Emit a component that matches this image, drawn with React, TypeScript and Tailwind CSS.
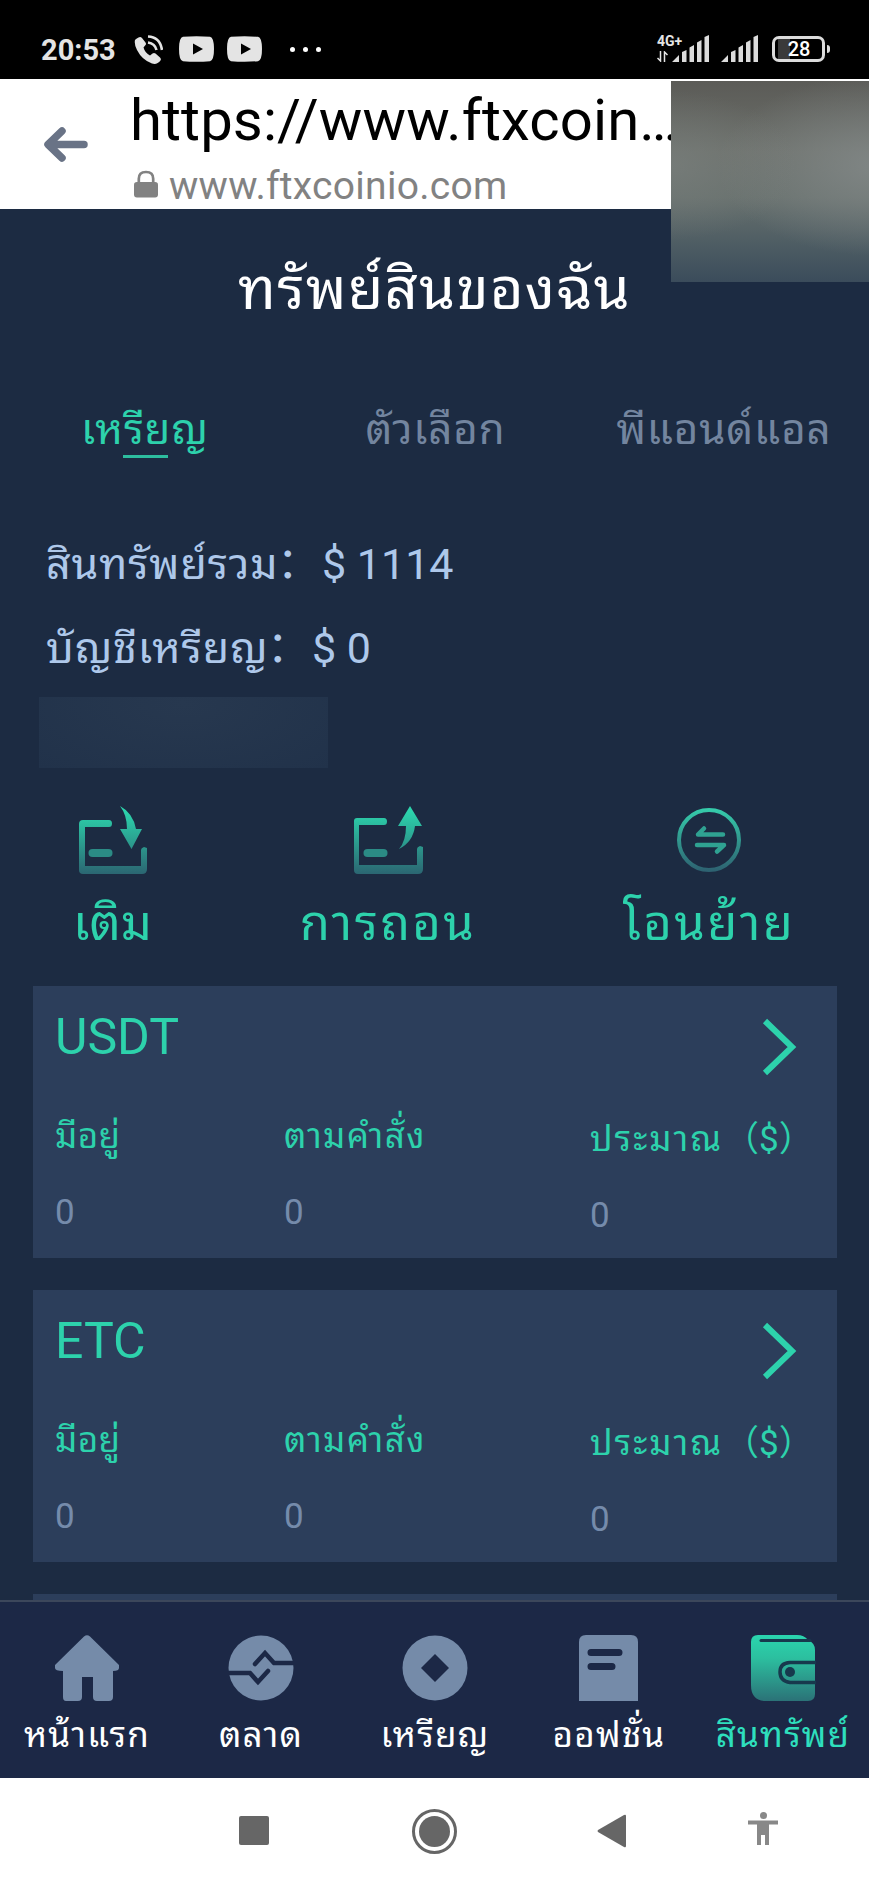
import type { ReactNode } from 'react';

const coins = ['USDT', 'ETC'];

function StatusBar() {
  return (
    <header className="flex h-[79px] items-start bg-black pt-[34px] pl-[41px] text-[#e4e4e4]">
      <span className="w-[93px] text-[29px] leading-[32px] font-bold">20:53</span>
      <svg className="mt-px h-[29px] w-[29px]" viewBox="0 0 29 29" fill="none">
        <path d="M1 5Q0 9 3 15 8 25 18 28.500 23 30 26.500 25.500 27.500 24 26 22.500L21.500 18.500Q20 17.500 18.500 18.500L16 20.500Q11 18 9.500 12.500L11.500 10Q12.500 9 11.500 7.500L8 3Q6.500 1.500 4.500 2.500 2 3.500 1 5Z" fill="currentColor" />
        <path d="M14 1.500Q26 2 28 15M14 7.500Q21 8.500 22.500 15" stroke="currentColor" strokeWidth="2.6" />
      </svg>
      {[0, 1].map((i) => (
        <svg key={i} className={i === 0 ? 'mt-[2px] ml-[16px] h-[26px] w-[35px]' : 'mt-[2px] ml-[13px] h-[26px] w-[35px]'} viewBox="0 0 35 26">
          <path d="M4 0.800Q17.500-.4 31 .8 35 1.500 35 13T31 25.200Q17.500 26.400 4 25.200 0 24.500 0 13T4 .8Z" fill="currentColor" />
          <path d="M14 7.500V18.500L24 13Z" fill="#000" />
        </svg>
      ))}
      <div className="mt-[13px] ml-[28px] flex gap-[8px]">
        <i className="h-[5px] w-[5px] rounded-full bg-white" />
        <i className="h-[5px] w-[5px] rounded-full bg-white" />
        <i className="h-[5px] w-[5px] rounded-full bg-white" />
      </div>
      <div className="ml-[336px] w-[26px]">
        <div className="text-[14px] leading-[14px] font-bold">4G+</div>
        <svg className="mt-[3px] h-[11px] w-[11px]" viewBox="0 0 11 11" stroke="currentColor" strokeWidth="1.5" fill="none">
          <path d="M3.500 0V10L.5 7M7.500 11V1L10.500 4" />
        </svg>
      </div>
      <Signal className="-ml-[11px]" />
      <Signal className="ml-[12px]" />
      <div className="mt-[2px] ml-[14px] flex h-[26px] w-[53px] items-center justify-center rounded-[7px] border-[3px] border-[#dcdcdc] bg-[linear-gradient(90deg,#000_3px,#3a3a3a_3px,#3a3a3a_15px,#000_15px)] pl-px text-[20px] leading-[20px] font-medium text-white">
        28
      </div>
      <i className="mt-[11px] ml-[2px] h-[8px] w-[3px] rounded-r bg-[#dcdcdc]" />
    </header>
  );
}

function Signal({ className }: { className: string }) {
  return (
    <svg className={`mt-px h-[27px] w-[37px] ${className}`} viewBox="0 0 37 27" fill="#dcdcdc">
      <path d="M0 27 7 20V27ZM10 17 14.500 15V27H10ZM17.500 12.500 22 10V27H17.500ZM25 7.500 29.500 5V27H25ZM32.500 2 37 0V27H32.500Z" />
    </svg>
  );
}

function AddressBar() {
  return (
    <div className="relative flex h-[130px] bg-white">
      <svg className="mt-[47px] ml-[43px] h-[38px] w-[46px]" viewBox="0 0 46 38" fill="none" stroke="#697386" strokeWidth="7.500" strokeLinecap="round" strokeLinejoin="round">
        <path d="M19 5 5 18.500 19 32M7 18.500H41" />
      </svg>
      <div className="ml-[41px] whitespace-nowrap">
        <div className="mt-[4px] text-[58px] leading-[74px] tracking-[0.1px] text-black">https://www.ftxcoin…</div>
        <div className="mt-[4px] flex h-[50px] items-center text-[39px] leading-[50px] tracking-[0.28px] text-[#828282]">
          <svg className="mr-[11px] mb-[5px] ml-[4px] h-[28px] w-[24px]" viewBox="0 0 25 28" fill="none">
            <rect y="12" width="25" height="16" rx="3" fill="#828282" />
            <path d="M5 12V8.500Q5 1.500 12.500 1.500T20 8.500V12" stroke="#828282" strokeWidth="2.800" />
          </svg>
          www.ftxcoinio.com
        </div>
      </div>
      <div className="absolute top-[2px] left-[671px] h-[201px] w-[198px] bg-[radial-gradient(ellipse_at_0%_42%,#7c828099,transparent_45%),radial-gradient(ellipse_at_105%_42%,#858b8bcc,transparent_55%),linear-gradient(#5b5b57,#6c706b_35%,#67706d_58%,#4d5c63_82%,#3b4c5b)]" />
    </div>
  );
}

function Tabs() {
  return (
    <nav className="mt-[66px] flex h-[70px] text-[42px] leading-[70px] tracking-[0.9px] whitespace-nowrap text-[#73859f]">
      <div className="flex w-[290px] flex-col items-center text-[#2dd2ac]">
        <span className="h-[60px]">เหรียญ</span>
        <i className="h-[3px] w-[45px] shrink-0 bg-[#2dbd9f]" />
      </div>
      <div className="flex w-[291px] justify-center">ตัวเลือก</div>
      <div className="flex w-[286px] justify-center">พีแอนด์แอล</div>
    </nav>
  );
}

function BoxIcon({ up }: { up?: boolean }) {
  return (
    <svg className="h-[70px] w-[70px]" viewBox="0 0 70 70" fill="none">
      <defs>
        <linearGradient id="teal" gradientUnits="userSpaceOnUse" x1="0" y1="5" x2="0" y2="68">
          <stop stopColor="#2cd4ac" />
          <stop offset="1" stopColor="#2b6672" />
        </linearGradient>
      </defs>
      <path
        d={up ? 'M1 15Q1 12 4 12H31Q34 12 34 15.500T31 19H6V59H64V43Q64 41 67 40L70 41V63Q70 68 65 68H5Q1 68 1 64Z' : 'M1 18Q1 14 5 14H31Q34 14 34 17.500T31 21H7V60H63V44Q63 42 66 41L69 42V63Q69 68 64 68H5Q1 68 1 64Z'}
        fill="url(#teal)"
      />
      <rect x="10.500" y="43" width="24" height="8" rx="4" fill="#2b8b85" />
      <path
        d={up ? 'M57 0 69 20H62Q60 36 46 43Q53 35 53 20H45Z' : 'M42 0Q55 7 58 23H64L53.500 43 42 23H49Q49 9 42 0Z'}
        fill="url(#teal)"
      />
    </svg>
  );
}

function TransferIcon() {
  return (
    <svg className="h-[70px] w-[70px]" viewBox="0 0 70 70" fill="none" strokeLinecap="round" strokeLinejoin="round">
      <defs>
        <linearGradient id="ring" gradientUnits="userSpaceOnUse" x1="0" y1="3" x2="0" y2="66">
          <stop stopColor="#35ccab" />
          <stop offset="1" stopColor="#2d6070" />
        </linearGradient>
      </defs>
      <circle cx="35" cy="34" r="30" stroke="url(#ring)" strokeWidth="4" />
      <path d="M49 28.500H24L30 22.500M23 39H50L43 45.500" stroke="#2fa292" strokeWidth="4.500" />
    </svg>
  );
}

function Action({ icon, label, className }: { icon: ReactNode; label: string; className: string }) {
  return (
    <button className={`flex flex-col items-center whitespace-nowrap ${className}`}>
      {icon}
      <span className="mt-[13px] text-[49px] leading-[70px]">{label}</span>
    </button>
  );
}

function CoinCard({ name }: { name: string }) {
  return (
    <section className="mb-[32px] h-[272px] bg-[#2c3e5b] pl-[22px] text-[#2dd2ac]">
      <div className="flex h-[126px] justify-between pt-[20px] pr-[40px]">
        <h2 className="text-[50px] leading-[62px]">{name}</h2>
        <svg className="mt-[12px] h-[58px] w-[36px]" viewBox="0 0 36 58" fill="none" stroke="currentColor" strokeWidth="6">
          <path d="M4 3 31 29 4 55" />
        </svg>
      </div>
      <div className="flex text-[35px] leading-[50px] whitespace-nowrap">
        <div className="w-[229px]">
          <div className="tracking-[0.4px]">มีอยู่</div>
          <div className="mt-[26px] text-[#758bab]">0</div>
        </div>
        <div className="w-[306px]">
          <div className="tracking-[1.4px]">ตามคำสั่ง</div>
          <div className="mt-[26px] text-[#758bab]">0</div>
        </div>
        <div className="pt-[3px]">
          <div className="flex h-[50px]">
            <span className="w-[134px] tracking-[2px]">ประมาณ</span>
            <span className="font-[Roboto,'Noto_Sans_CJK_SC',sans-serif]">（$）</span>
          </div>
          <div className="mt-[26px] text-[#758bab]">0</div>
        </div>
      </div>
    </section>
  );
}

function NavIcon({ children }: { children: ReactNode }) {
  return (
    <svg className="h-[66px] w-[66px]" viewBox="0 0 66 66" fill="#758ba9">
      {children}
    </svg>
  );
}

function NavItem({ label, active, children }: { label: string; active?: boolean; children: ReactNode }) {
  return (
    <a className={`flex w-[174px] shrink-0 flex-col items-center whitespace-nowrap ${active ? 'text-[#2edfbd]' : 'text-white'}`}>
      <NavIcon>{children}</NavIcon>
      <span className="mt-[10px] text-[35px] leading-[50px] tracking-[1.2px]">{label}</span>
    </a>
  );
}

function BottomNav() {
  return (
    <nav className="flex h-[178px] shrink-0 overflow-hidden border-t-2 border-[#3c475b] bg-[#1c2846] pt-[33px]">
      <NavItem label="หน้าแรก">
        <path d="M30 1.500Q33-1 36 1.500L65 30V33Q65 36 59 36V62Q59 66 55 66H43Q39 66 39 62V42H28V62Q28 66 24 66H12Q9 66 9 62V36Q1 36 1 33V30Z" />
      </NavItem>
      <NavItem label="ตลาด">
        <circle cx="33" cy="33" r="32.500" />
        <path d="M0 38H22L30 47 40 36M66 28H46L37 18 27 29" fill="none" stroke="#1c2846" strokeWidth="4.500" strokeLinecap="round" />
      </NavItem>
      <NavItem label="เหรียญ">
        <circle cx="33" cy="33" r="32.500" />
        <path d="M33 19 47 33 33 47 19 33Z" fill="#1c2846" />
      </NavItem>
      <NavItem label="ออฟชั่น">
        <path d="M3 7Q3 0 10 0H55Q62 0 62 7V66H3Z" />
        <path d="M15 17.500H43M15 31.500H36" stroke="#1c2846" strokeWidth="7" strokeLinecap="round" />
      </NavItem>
      <NavItem label="สินทรัพย์" active>
        <defs>
          <linearGradient id="wallet" x1="0" y1="0" x2="0" y2="1">
            <stop stopColor="#2ad5ae" />
            <stop offset="0.350" stopColor="#2cbf9f" />
            <stop offset="1" stopColor="#2b7277" />
          </linearGradient>
        </defs>
        <path d="M1 7Q1 0 8 0H47Q54 0 58 5 65 8 65 15V59Q65 66 58 66H16Q1 66 1 50Z" fill="url(#wallet)" />
        <path d="M11 5.500H60" stroke="#17394d" strokeWidth="3" strokeLinecap="round" />
        <path d="M66 27.500H40Q30 28 30 37T40 47.500H66" fill="none" stroke="#17394d" strokeWidth="3.500" />
        <circle cx="40" cy="37" r="5" fill="#17394d" />
      </NavItem>
    </nav>
  );
}

function SystemNav() {
  return (
    <footer className="flex h-[105px] items-start bg-white">
      <i className="mt-[38px] ml-[239px] h-[29px] w-[30px] rounded-[2px] bg-[#666]" />
      <div className="mt-[31px] ml-[143px] flex h-[45px] w-[45px] items-center justify-center rounded-full border-[3px] border-[#666]">
        <i className="h-[31px] w-[31px] rounded-full bg-[#666]" />
      </div>
      <svg className="mt-[36px] ml-[140px] h-[34px] w-[29px]" viewBox="0 0 29 34" fill="#666">
        <path d="M1 16 27 1Q29 0 29 2V32Q29 34 27 33L1 18Q0 17 1 16Z" />
      </svg>
      <svg className="mt-[34px] ml-[121px] h-[33px] w-[32px]" viewBox="0 0 32 33" fill="#888">
        <circle cx="16.500" cy="3.500" r="3.500" />
        <path d="M1 8.500H31V12.500H22V33H18V23H14V33H10V12.500H1Z" />
      </svg>
    </footer>
  );
}

export default function App() {
  return (
    <div className="flex h-[1883px] w-[869px] flex-col overflow-hidden bg-[#1c2b42] font-[Roboto,'Noto_Sans_Thai_Looped','Noto_Looped_Thai','Droid_Sans_Thai',Loma,Waree,Garuda,Sarabun,sans-serif]">
      <StatusBar />
      <AddressBar />
      <main className="h-[1391px] shrink-0 overflow-hidden">
        <h1 className="mt-[40px] h-[80px] text-center text-[58px] leading-[80px] tracking-[1.2px] text-white">ทรัพย์สินของฉัน</h1>
        <Tabs />
        <div className="mt-[57px] mb-[7px] pl-[46px] text-[43px] leading-[84px] whitespace-nowrap text-[#aec8ea]">
          <p className="flex h-[84px]">
            <span className="w-[231px] tracking-[0.85px]">สินทรัพย์รวม</span>
            <span className="-mt-[5px] w-[45px] font-['Noto_Sans_CJK_SC',sans-serif]">：</span>$ 1114
          </p>
          <p className="flex h-[84px]">
            <span className="w-[221px] tracking-[0.85px]">บัญชีเหรียญ</span>
            <span className="-mt-[5px] w-[45px] font-['Noto_Sans_CJK_SC',sans-serif]">：</span>$ 0
          </p>
        </div>
        <div className="ml-[39px] h-[71px] w-[289px] bg-[radial-gradient(ellipse_at_50%_10%,#27384f,#21324a)]" />
        <div className="mt-[38px] flex h-[180px] text-[#2dd2ac]">
          <Action className="w-[225px]" icon={<BoxIcon />} label="เติม" />
          <Action className="w-[326px] tracking-[2.4px]" icon={<BoxIcon up />} label="การถอน" />
          <Action className="w-[316px] tracking-[2.4px]" icon={<TransferIcon />} label="โอนย้าย" />
        </div>
        <div className="mr-[32px] ml-[33px]">
          {coins.map((name) => (
            <CoinCard key={name} name={name} />
          ))}
          <div className="h-[10px] bg-[#2c3e5b]" />
        </div>
      </main>
      <BottomNav />
      <SystemNav />
    </div>
  );
}
